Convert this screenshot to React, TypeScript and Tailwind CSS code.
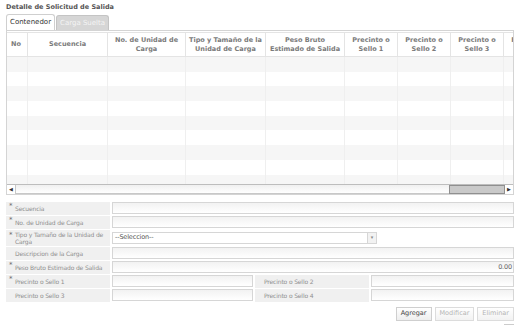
import React from 'react';

const cols = [
  { label: 'No', w: 21 },
  { label: 'Secuencia', w: 80 },
  { label: 'No. de Unidad de Carga', w: 78 },
  { label: 'Tipo y Tamaño de la Unidad de Carga', w: 80 },
  { label: 'Peso Bruto Estimado de Salida', w: 79 },
  { label: 'Precinto o Sello 1', w: 53 },
  { label: 'Precinto o Sello 2', w: 53 },
  { label: 'Precinto o Sello 3', w: 53 },
  { label: 'Precinto o Sello 4', w: 53 },
];

function Label({ text, req }: { text: string; req?: boolean }) {
  return (
    <div className="flex w-[104px] shrink-0 items-center bg-[#f0f0f0] pl-[3px] text-[#8f8f8f]">
      <span className="w-[6px] shrink-0 self-start text-[7px] leading-[8px] text-[#666]">{req ? '*' : ''}</span>
      <span className="whitespace-nowrap leading-[8px]">{text}</span>
    </div>
  );
}

function Input({ className = '', value = '' }: { className?: string; value?: string }) {
  return (
    <div className={`h-[12px] border border-[#d6d6d6] bg-gradient-to-b from-[#f2f2f2] to-white pr-[1px] text-right text-[6.5px] leading-[11px] text-[#666] ${className}`}>
      {value}
    </div>
  );
}

export default function App() {
  const rows = Array.from({ length: 9 });
  return (
    <div className="h-[329px] w-[517px] overflow-hidden bg-white pl-[6px] pt-[2px] text-[6px] tracking-[-0.15px] text-[#777]" style={{ fontFamily: '"DejaVu Sans", Verdana, sans-serif' }}>
      <div className="text-[6.5px] font-bold leading-[10px] tracking-normal text-[#555]">Detalle de Solicitud de Salida</div>

      {/* Tabs */}
      <div className="mt-[2px] flex h-[16px] items-end tracking-normal">
        <div className="flex h-[16px] items-center rounded-t-[3px] border border-b-0 border-[#cfcfcf] bg-white px-[3px] text-[7px] text-[#333]">
          Contenedor
        </div>
        <div className="ml-[1px] flex h-[15px] items-center rounded-t-[3px] border border-b-0 border-[#c4c4c4] bg-[#d6d6d6] px-[3px] text-[7px] text-[#f4f4f4]">
          Carga Suelta
        </div>
      </div>

      {/* Grid */}
      <div className="w-[508px] overflow-hidden border border-[#d4d4d4] tracking-normal">
        <div className="mt-[1px] flex h-[25px] w-[600px] border-b border-t border-[#e4e4e4]">
          {cols.map((c, i) => (
            <div key={i} style={{ width: c.w }} className={`flex shrink-0 items-center border-r border-[#e4e4e4] px-[2px] text-center text-[6.5px] font-bold leading-[9px] text-[#7a7a7a] ${i === 0 ? 'justify-start pl-[4px]' : 'justify-center'}`}>
              {c.label}
            </div>
          ))}
        </div>
        <div className="h-[127px] overflow-hidden">
          {rows.map((_, r) => (
            <div key={r} className={`flex h-[14.7px] w-[600px] ${r % 2 === 0 ? 'bg-[#f6f6f6]' : 'bg-white'}`}>
              {cols.map((c, i) => (
                <div key={i} style={{ width: c.w }} className="shrink-0 border-r border-[#efefef]" />
              ))}
            </div>
          ))}
        </div>
        {/* horizontal scrollbar */}
        <div className="flex h-[10px] border-t border-[#bdbdbd] bg-[#f4f4f4]">
          <div className="flex w-[9px] items-center justify-center border-r border-[#c8c8c8] bg-white text-[5px] text-[#333]">◀</div>
          <div className="flex-1 border-b border-[#c8c8c8] bg-gradient-to-b from-[#f0f0f0] to-white" />
          <div className="w-[56px] border border-[#8f8f8f] bg-[#c9c9c9]" />
          <div className="flex w-[8px] items-center justify-center bg-white text-[5px] text-[#333]">▶</div>
        </div>
      </div>

      {/* Form */}
      <div className="mt-[7px] flex w-[508px] flex-col gap-[1px]">
        <div className="flex h-[13px] gap-[2px]">
          <Label text="Secuencia" req />
          <Input className="flex-1" />
        </div>
        <div className="flex h-[13px] gap-[2px]">
          <Label text="No. de Unidad de Carga" req />
          <Input className="flex-1" />
        </div>
        <div className="flex h-[16px] gap-[2px]">
          <div className="flex w-[104px] shrink-0 bg-[#f0f0f0] pl-[3px] pt-[1px] text-[#8f8f8f]">
            <span className="w-[6px] shrink-0 text-[7px] leading-[8px] text-[#666]">*</span>
            <span className="leading-[7px]">Tipo y Tamaño de la Unidad de Carga</span>
          </div>
          <div className="flex flex-1 items-center">
            <div className="flex h-[12px] w-[256px] items-center border border-[#d6d6d6] bg-white pl-[2px] text-[6.5px] text-[#555]">--Seleccion--</div>
            <div className="flex h-[12px] w-[9px] items-center justify-center border border-l-0 border-[#d6d6d6] bg-[#f2f2f2] text-[5px] text-[#888]">▾</div>
          </div>
        </div>
        <div className="flex h-[13px] gap-[2px]">
          <Label text="Descripcion de la Carga" />
          <Input className="flex-1" />
        </div>
        <div className="flex h-[13px] gap-[2px]">
          <Label text="Peso Bruto Estimado de Salida" req />
          <Input className="flex-1" value="0.00" />
        </div>
        <div className="flex h-[13px] gap-[2px]">
          <Label text="Precinto o Sello 1" req />
          <Input className="w-[141px]" />
          <div className="flex w-[114px] items-center bg-[#f0f0f0] pl-[9px] text-[#8f8f8f]">Precinto o Sello 2</div>
          <Input className="flex-1" />
        </div>
        <div className="flex h-[13px] gap-[2px]">
          <Label text="Precinto o Sello 3" />
          <Input className="w-[141px]" />
          <div className="flex w-[114px] items-center bg-[#f0f0f0] pl-[9px] text-[#8f8f8f]">Precinto o Sello 4</div>
          <Input className="flex-1" />
        </div>
      </div>

      {/* Buttons */}
      <div className="mt-[5px] flex w-[508px] justify-end gap-[3px] tracking-normal">
        <button className="h-[14px] border border-[#cfcfcf] bg-gradient-to-b from-white to-[#eeeeee] px-[4px] text-[6.5px] text-[#444]">Agregar</button>
        <button className="h-[14px] border border-[#dcdcdc] bg-gradient-to-b from-white to-[#f2f2f2] px-[4px] text-[6.5px] text-[#b5b5b5]">Modificar</button>
        <button className="h-[14px] border border-[#dcdcdc] bg-gradient-to-b from-white to-[#f2f2f2] px-[4px] text-[6.5px] text-[#b5b5b5]">Eliminar</button>
      </div>
      <div className="ml-[498px] mt-[3px] h-px w-[10px] bg-[#ccc]" />
    </div>
  );
}
